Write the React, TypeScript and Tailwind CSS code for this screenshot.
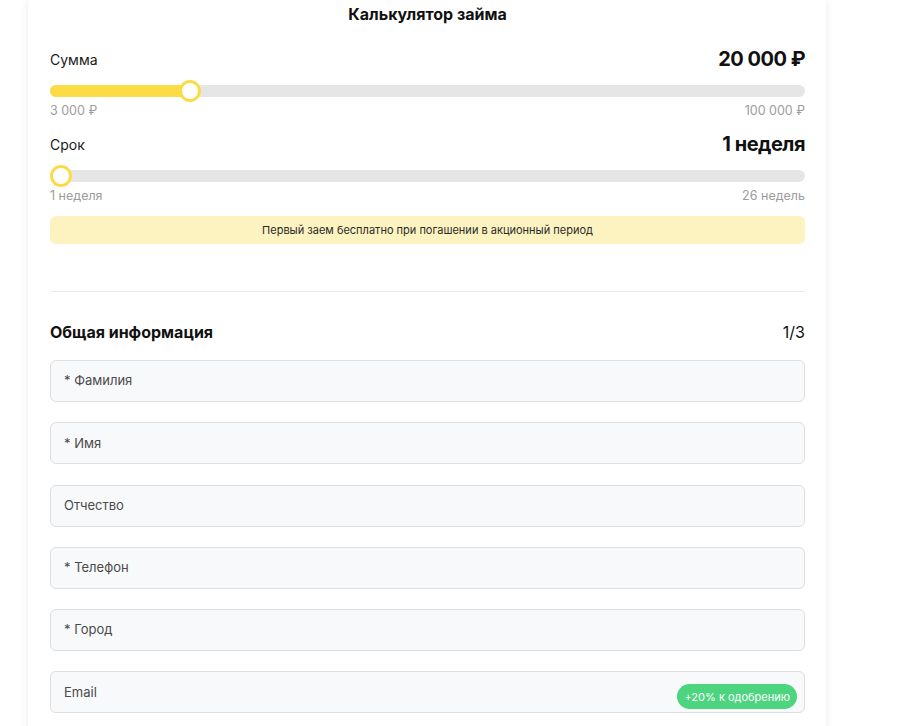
import React from 'react'

const font = { fontFamily: 'Inter, "Noto Sans", sans-serif' }

type SliderProps = {
  label: string
  value: string
  percent: number
  min: string
  max: string
}

function Slider({ label, value, percent, min, max }: SliderProps) {
  return (
    <div>
      <div className="flex items-center justify-between h-[28px]">
        <span className="text-[14px] text-[#1a1a1a]">{label}</span>
        <span className="text-[20px] font-bold text-[#111] tracking-tight">{value}</span>
      </div>
      <div className="relative mt-[7px] h-[22px]">
        <div className="absolute left-0 right-0 top-[5px] h-[12px] rounded-full bg-[#e6e6e6]" />
        <div
          className="absolute left-0 top-[5px] h-[12px] rounded-full bg-[#fcdc46]"
          style={{ width: `${percent}%` }}
        />
        <div
          className="absolute top-0 h-[22px] w-[22px] -translate-x-1/2 rounded-full border-[3px] border-[#fcdc46] bg-white"
          style={{ left: `calc(${percent}% + ${percent === 0 ? 11 : 0}px)` }}
        />
      </div>
      <div className="flex justify-between h-[18px] text-[12.5px] leading-[18px] text-[#9c9c9c]">
        <span>{min}</span>
        <span>{max}</span>
      </div>
    </div>
  )
}

const fields = ['* Фамилия', '* Имя', 'Отчество', '* Телефон', '* Город', 'Email']

export default function App() {
  return (
    <div className="min-h-[726px] bg-white overflow-hidden" style={font}>
      <div className="ml-[28px] w-[798px] bg-white pl-[22px] pr-[21px] pt-[4px] pb-[40px] shadow-[0_0_8px_rgba(0,0,0,0.09)]">
        <h1 className="text-center text-[16px] leading-[20px] font-bold text-[#111]">Калькулятор займа</h1>

        <div className="mt-[21px]">
          <Slider label="Сумма" value="20 000 ₽" percent={18.5} min="3 000 ₽" max="100 000 ₽" />
        </div>
        <div className="mt-[10px]">
          <Slider label="Срок" value="1 неделя" percent={0} min="1 неделя" max="26 недель" />
        </div>

        <div className="mt-[11px] flex h-[28px] items-center justify-center rounded-[6px] bg-[#fdf3c1] text-[11px] text-[#2a2a2a]">
          Первый заем бесплатно при погашении в акционный период
        </div>

        <div className="mt-[47px] h-px bg-[#ececec]" />

        <div className="mt-[28px] flex h-[24px] items-center justify-between">
          <h2 className="text-[16px] font-bold text-[#111]">Общая информация</h2>
          <span className="text-[16px] text-[#111]">1/3</span>
        </div>

        <div className="mt-[16px] flex flex-col gap-[20.25px]">
          {fields.map((f) => (
            <div
              key={f}
              className="relative flex h-[42px] items-center rounded-[6px] border border-[#dedede] bg-[#f8f9fa] pl-[13px] text-[13px] text-[#4a4a4a]"
            >
              {f}
              {f === 'Email' && (
                <span className="absolute right-[7px] top-[12px] flex h-[25px] items-center rounded-full bg-[#4dd47f] px-[7px] text-[11px] text-white">
                  +20% к одобрению
                </span>
              )}
            </div>
          ))}
        </div>
      </div>
    </div>
  )
}
